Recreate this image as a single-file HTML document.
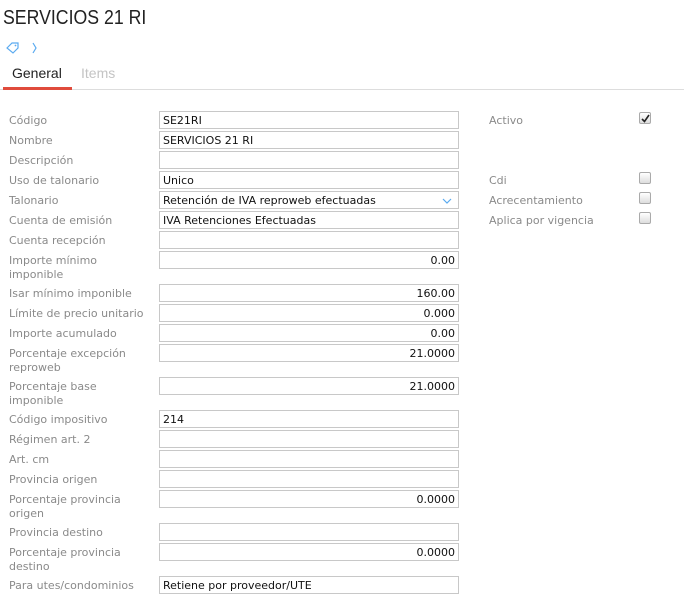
<!DOCTYPE html>
<html><head><meta charset="utf-8"><style>
body{margin:0;width:684px;height:609px;background:#fff;position:relative;overflow:hidden;font-family:"DejaVu Sans",Verdana,sans-serif;}
.t{position:absolute;left:3px;top:7px;font:20px "Liberation Sans",sans-serif;color:#222;transform:scaleX(0.885);transform-origin:0 0}
.l{position:absolute;left:9px;font-size:11px;color:#8a8a8a;line-height:14px;width:145px}
.r{position:absolute;left:489px;font-size:11px;color:#8a8a8a;line-height:14px}
.i{position:absolute;left:159px;width:300px;height:18px;box-sizing:border-box;border:1px solid #c8c8c8;font-size:11px;color:#111;line-height:17px;padding:0 3px;white-space:nowrap}
.n{text-align:right}
.c{position:absolute;left:639px;width:12px;height:12px;box-sizing:border-box;border:1px solid #aaa;border-radius:2px;background:linear-gradient(#fff,#ddd)}
</style></head><body>
<div class="t">SERVICIOS 21 RI</div>
<svg style="position:absolute;left:5px;top:41px" width="32" height="14" viewBox="0 0 32 14"><path d="M2 7 L7 2 L13 2 L13 7 L8 12 Z" fill="none" stroke="#5aaaf0" stroke-width="1.2"/><circle cx="10.5" cy="4.5" r="0.9" fill="#5aaaf0"/><path d="M28 2 L31 7 L28 12" fill="none" stroke="#5aaaf0" stroke-width="1.2"/></svg>
<div style="position:absolute;left:12px;top:65px;font:14px 'Liberation Sans',sans-serif;color:#222">General</div>
<div style="position:absolute;left:81px;top:65px;font:14px 'Liberation Sans',sans-serif;color:#c4c4c4">Items</div>
<div style="position:absolute;left:0;top:89px;width:684px;height:1px;background:#ddd"></div>
<div style="position:absolute;left:3px;top:87px;width:69px;height:3px;background:#e04b3c"></div>

<div class="l" style="top:114px">Código</div><div class="i" style="top:111px">SE21RI</div>
<div class="l" style="top:134px">Nombre</div><div class="i" style="top:131px">SERVICIOS 21 RI</div>
<div class="l" style="top:154px">Descripción</div><div class="i" style="top:151px"></div>
<div class="l" style="top:174px">Uso de talonario</div><div class="i" style="top:171px">Unico</div>
<div class="l" style="top:194px">Talonario</div><div class="i" style="top:191px">Retención de IVA reproweb efectuadas<svg style="position:absolute;right:6px;top:6px" width="10" height="6"><path d="M1 1 L5 5 L9 1" fill="none" stroke="#5aaaf0" stroke-width="1.2"/></svg></div>
<div class="l" style="top:214px">Cuenta de emisión</div><div class="i" style="top:211px">IVA Retenciones Efectuadas</div>
<div class="l" style="top:234px">Cuenta recepción</div><div class="i" style="top:231px"></div>
<div class="l" style="top:254px">Importe mínimo imponible</div><div class="i n" style="top:251px">0.00</div>
<div class="l" style="top:287px">Isar mínimo imponible</div><div class="i n" style="top:284px">160.00</div>
<div class="l" style="top:307px">Límite de precio unitario</div><div class="i n" style="top:304px">0.000</div>
<div class="l" style="top:327px">Importe acumulado</div><div class="i n" style="top:324px">0.00</div>
<div class="l" style="top:347px">Porcentaje excepción reproweb</div><div class="i n" style="top:344px">21.0000</div>
<div class="l" style="top:380px">Porcentaje base imponible</div><div class="i n" style="top:377px">21.0000</div>
<div class="l" style="top:413px">Código impositivo</div><div class="i" style="top:410px">214</div>
<div class="l" style="top:433px">Régimen art. 2</div><div class="i" style="top:430px"></div>
<div class="l" style="top:453px">Art. cm</div><div class="i" style="top:450px"></div>
<div class="l" style="top:473px">Provincia origen</div><div class="i" style="top:470px"></div>
<div class="l" style="top:493px">Porcentaje provincia origen</div><div class="i n" style="top:490px">0.0000</div>
<div class="l" style="top:526px">Provincia destino</div><div class="i" style="top:523px"></div>
<div class="l" style="top:546px">Porcentaje provincia destino</div><div class="i n" style="top:543px">0.0000</div>
<div class="l" style="top:579px">Para utes/condominios</div><div class="i" style="top:576px">Retiene por proveedor/UTE</div>

<div class="r" style="top:114px">Activo</div><div class="c" style="top:112px"><svg style="position:absolute;left:1px;top:1px" width="9" height="9"><path d="M1 5 L3.5 7.5 L8 1" fill="none" stroke="#222" stroke-width="1.6"/></svg></div>
<div class="r" style="top:174px">Cdi</div><div class="c" style="top:172px"></div>
<div class="r" style="top:194px">Acrecentamiento</div><div class="c" style="top:192px"></div>
<div class="r" style="top:214px">Aplica por vigencia</div><div class="c" style="top:212px"></div>
</body></html>
